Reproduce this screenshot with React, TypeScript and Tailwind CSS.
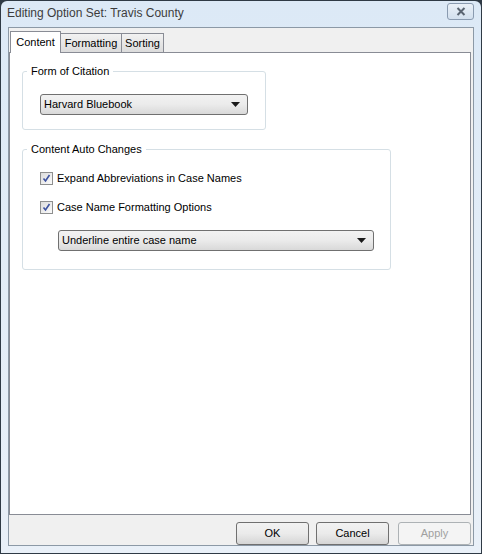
import React from "react";

function Caret() {
  return (
    <svg width="9" height="5" viewBox="0 0 9 5" className="shrink-0">
      <path d="M0 0h9L4.5 5z" fill="#1a1a1a" />
    </svg>
  );
}

function Combo({ label, className }: { label: string; className: string }) {
  return (
    <div
      className={
        "flex h-[21px] items-center justify-between rounded-[3px] border border-[#707070] bg-gradient-to-b from-[#f2f2f2] via-[#ebebeb] to-[#d9d9d9] pl-[3px] pr-[7px] " +
        className
      }
    >
      <span>{label}</span>
      <Caret />
    </div>
  );
}

function Check({ label }: { label: string }) {
  return (
    <div className="flex h-[16px] items-center gap-[4px]">
      <div className="flex h-[13px] w-[13px] items-center justify-center border border-[#8e8f8f] bg-gradient-to-br from-[#dcdcdc] to-[#fbfbfb]">
        <svg width="9" height="9" viewBox="0 0 9 9">
          <path d="M1.5 4.5l2 2.5 4-6" stroke="#3d52a0" strokeWidth="1.6" fill="none" />
        </svg>
      </div>
      <span>{label}</span>
    </div>
  );
}

function Group({ title, className, children }: { title: string; className: string; children: React.ReactNode }) {
  return (
    <fieldset className={"rounded-[3px] border border-[#d5dfe5] " + className}>
      <legend className="ml-[4px] px-[4px] leading-[14px]">{title}</legend>
      {children}
    </fieldset>
  );
}

function Button({ label, disabled }: { label: string; disabled?: boolean }) {
  return (
    <div
      className={
        "flex h-[23px] w-[73px] items-center justify-center rounded-[3px] border " +
        (disabled
          ? "border-[#adb2b5] bg-[#f4f4f4] text-[#a0a0a0]"
          : "border-[#707070] bg-gradient-to-b from-[#f2f2f2] via-[#ebebeb] to-[#d5d5d5] text-black")
      }
    >
      {label}
    </div>
  );
}

export default function App() {
  return (
    <div className="h-[554px] w-[482px] overflow-hidden bg-[#2f3a45] p-px font-['Segoe_UI','Liberation_Sans',sans-serif] text-[11px] text-black">
      <div className="flex h-full flex-col rounded-t-[6px] bg-gradient-to-b from-[#dce9f6] to-[#e9f0f8] px-[7px] pb-[7px]">
        <div className="flex h-[27px] items-center justify-between">
          <span className="-ml-px -mt-[2px] text-[12px] text-[#3c3c3c]">Editing Option Set: Travis County</span>
          <div className="mt-[-6px] flex h-[17px] w-[27px] items-center justify-center rounded-[3px] border border-[#8a9bb0] bg-gradient-to-b from-[#eaf1f8] to-[#d3e0ee]">
            <svg width="10" height="9" viewBox="0 0 10 9">
              <path d="M1.5 1l7 7M8.5 1l-7 7" stroke="#5a6572" strokeWidth="2" />
            </svg>
          </div>
        </div>
        <div className="flex flex-1 flex-col border border-[#8c99a6] bg-[#f0f0f0]">
          <div className="flex flex-1 flex-col pt-[3px]">
            <div className="relative z-10 flex items-end pl-px">
              <div className="-mb-px h-[22px] w-[51px] border border-b-0 border-[#898c95] bg-white text-center leading-[20px]">Content</div>
              <div className="h-[19px] w-[61px] border border-b-0 border-l-0 border-[#898c95] bg-gradient-to-b from-[#f2f2f2] to-[#dcdcdc] text-center leading-[18px]">
                Formatting
              </div>
              <div className="h-[19px] w-[42px] border border-b-0 border-l-0 border-[#898c95] bg-gradient-to-b from-[#f2f2f2] to-[#dcdcdc] text-center leading-[18px]">
                Sorting
              </div>
            </div>
            <div className="mr-[2px] h-[463px] border border-[#898c95] bg-white pl-[12px] pt-[11px]">
              <Group title="Form of Citation" className="w-[244px] pb-[14px] pt-[16px]">
                <div className="pl-[17px]">
                  <Combo label="Harvard Bluebook" className="w-[208px]" />
                </div>
              </Group>
              <Group title="Content Auto Changes" className="mt-[12px] w-[369px] pb-[18px] pt-[14px]">
                <div className="pl-[17px]">
                  <div className="flex flex-col gap-[13px]">
                    <Check label="Expand Abbreviations in Case Names" />
                    <Check label="Case Name Formatting Options" />
                  </div>
                  <Combo label="Underline entire case name" className="ml-[18px] mt-[15px] w-[316px]" />
                </div>
              </Group>
            </div>
            <div className="flex flex-1 items-start justify-end pr-[2px] pt-[7px]">
              <Button label="OK" />
              <div className="ml-[7px]">
                <Button label="Cancel" />
              </div>
              <div className="ml-[9px]">
                <Button label="Apply" disabled />
              </div>
            </div>
          </div>
        </div>
      </div>
    </div>
  );
}
